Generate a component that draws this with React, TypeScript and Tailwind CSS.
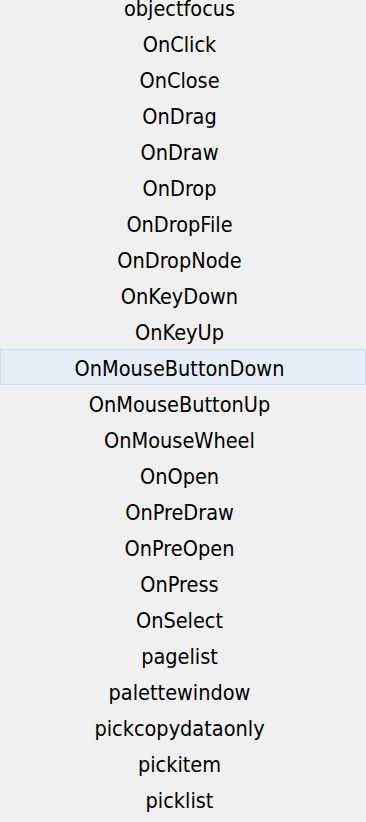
const items = [
  "objectfocus",
  "OnClick",
  "OnClose",
  "OnDrag",
  "OnDraw",
  "OnDrop",
  "OnDropFile",
  "OnDropNode",
  "OnKeyDown",
  "OnKeyUp",
  "OnMouseButtonDown",
  "OnMouseButtonUp",
  "OnMouseWheel",
  "OnOpen",
  "OnPreDraw",
  "OnPreOpen",
  "OnPress",
  "OnSelect",
  "pagelist",
  "palettewindow",
  "pickcopydataonly",
  "pickitem",
  "picklist",
];

const selected = "OnMouseButtonDown";

export default function App() {
  return (
    <div className="h-[822px] w-[366px] overflow-hidden bg-[#f0f0f0] font-['DejaVu_Sans_Condensed',sans-serif] text-[21.5px] text-black">
      <ul className="-mt-[11px] flex flex-col">
        {items.map((item) => (
          <li
            key={item}
            className={`flex h-[36px] items-center justify-center border pr-[7px] pt-[4px] ${
              item === selected ? "border-[#cddcec] bg-[#e5eef8]" : "border-transparent"
            }`}
          >
            {item}
          </li>
        ))}
      </ul>
    </div>
  );
}
